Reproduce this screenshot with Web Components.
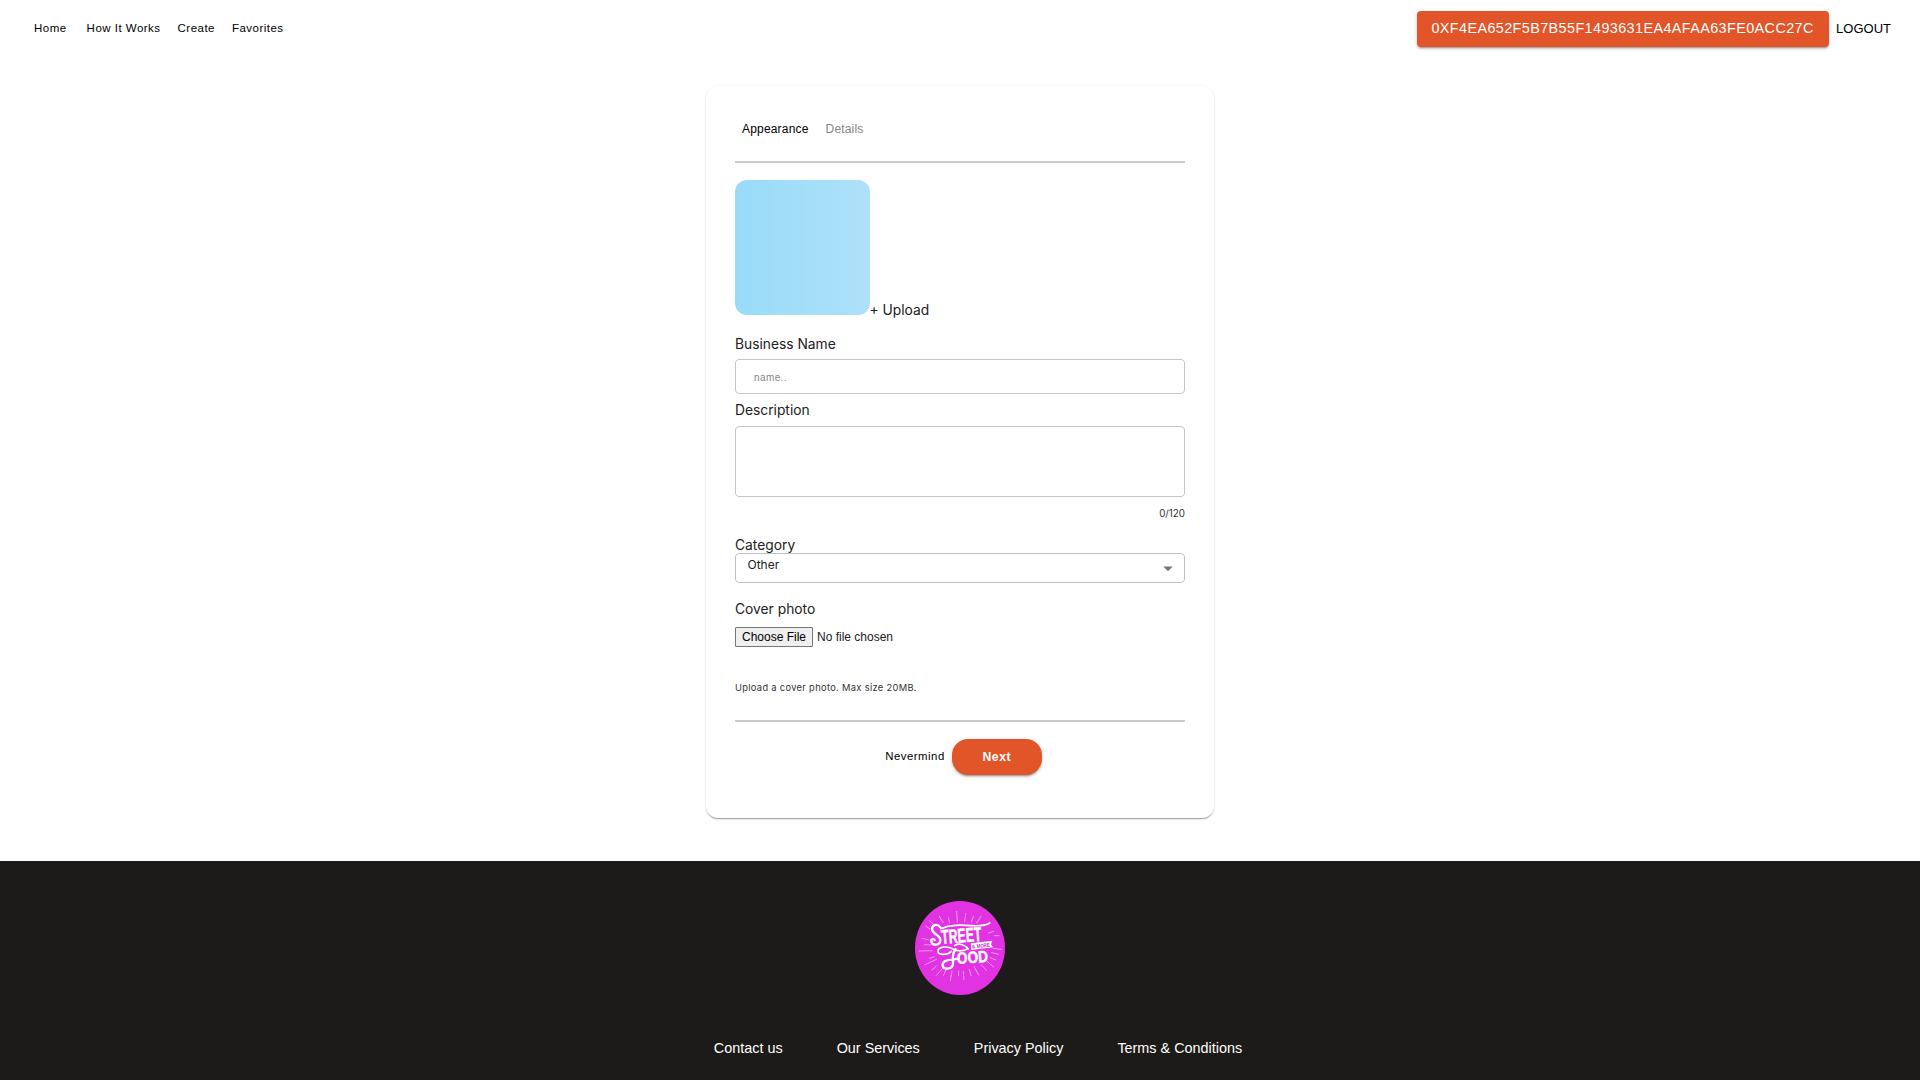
<!DOCTYPE html>
<html lang="en">
<head>
<meta charset="utf-8">
<title>Create a business</title>
<style>
body{margin:0;background:#fff;font-family:"Liberation Sans",Arial,sans-serif;color:#000;overflow:hidden}
</style>
</head>
<body>
<create-page></create-page>
<script>
const define = (name, html) => {
  const tpl = document.createElement('template');
  tpl.innerHTML = html;
  customElements.define(name, class extends HTMLElement {
    constructor() {
      super();
      this.attachShadow({ mode: 'open' }).appendChild(tpl.content.cloneNode(true));
    }
  });
};

define('nav-link', `<style>
:host{display:block;font-size:11.5px;line-height:16px;letter-spacing:.48px;white-space:nowrap}
</style><slot></slot>`);

define('wallet-button', `<style>
:host{display:flex;align-items:center;justify-content:center;box-sizing:border-box;width:412px;height:36px;padding:0 1px 2px 0;border-radius:4px;background:#e15529;color:#fff;font-size:14.4px;letter-spacing:.4px;white-space:nowrap;box-shadow:0 3px 1px -2px rgba(0,0,0,.2),0 2px 2px 0 rgba(0,0,0,.14),0 1px 5px 0 rgba(0,0,0,.12)}
</style><slot></slot>`);

define('site-header', `<style>
:host{display:flex;justify-content:space-between;align-items:flex-start;box-sizing:border-box;height:86px;padding:11px 29px 0 34px}
nav{display:flex;gap:17px;padding-top:9px}
nav-link:first-child{margin-right:3px}
.account{display:flex;gap:7px;align-items:center}
.logout{font-size:13px;line-height:20px;letter-spacing:0}
</style>
<nav><nav-link>Home</nav-link><nav-link>How It Works</nav-link><nav-link>Create</nav-link><nav-link>Favorites</nav-link></nav>
<div class="account"><wallet-button>0XF4EA652F5B7B55F1493631EA4AFAA63FE0ACC27C</wallet-button><span class="logout">LOGOUT</span></div>`);

define('form-tabs', `<style>
:host{display:flex;gap:17px;box-sizing:border-box;height:46px;padding:4px 7px 0;border-bottom:2px solid #cacaca;font-size:12px;line-height:16px;letter-spacing:.18px}
.off{color:#858585}
</style><span>Appearance</span><span class="off">Details</span>`);

define('photo-upload', `<style>
:host{display:flex;align-items:flex-end;margin-top:17px;font:13.8px/20px Inter,sans-serif;color:#212121}
i{width:135px;height:135px;border-radius:12px;background:linear-gradient(90deg,#98dbf8,#aee1f9)}
span{margin:0 0 -5px -.5px}
</style><i></i><span><slot></slot></span>`);

define('field-label', `<style>
:host{display:block;font:13.8px/20px Inter,sans-serif;color:#212121}
</style><slot></slot>`);

define('text-field', `<style>
:host{display:flex;align-items:center;box-sizing:border-box;border:1px solid #c6c6c6;border-radius:4px;height:var(--h,35px);padding:2px 18px 0;font-size:10px;letter-spacing:.4px;color:#858585}
</style><slot></slot>`);

define('select-field', `<style>
:host{display:flex;justify-content:space-between;box-sizing:border-box;border:1px solid #bfbfbf;border-radius:4px;height:30px;padding:3px 11px 0 11.5px;font:12px/16px Inter,sans-serif;color:#212121}
svg{margin-top:9px;width:10px;height:6px}
</style><slot></slot><svg viewBox="0 0 10 6"><path d="M.3.5h9.4L5 5.3z" fill="#757575"/></svg>`);

define('file-field', `<style>
:host{display:flex;align-items:center;gap:4px;font-size:12px;line-height:16px;color:#212121}
button{box-sizing:border-box;width:78px;height:20px;padding:0;margin:0;border:1px solid #767676;background:#efefef;color:#000;font:inherit;border-radius:1px}
</style><button>Choose File</button><span>No file chosen</span>`);

define('form-actions', `<style>
:host{display:flex;align-items:center;justify-content:center;gap:7px;box-sizing:border-box;margin-top:17px;padding-left:7px;font-size:11.4px;letter-spacing:.5px}
span{padding-bottom:2px}
b{display:flex;align-items:center;justify-content:center;width:90px;height:36px;border-radius:16px;background:#e15529;color:#fff;font-size:12.2px;letter-spacing:.5px;box-shadow:0 3px 1px -2px rgba(0,0,0,.2),0 2px 2px 0 rgba(0,0,0,.14),0 1px 5px 0 rgba(0,0,0,.12)}
</style><span>Nevermind</span><b>Next</b>`);

define('form-card', `<style>
:host{display:block;box-sizing:border-box;width:508px;height:732px;margin:0 auto;padding:31px 29px 0;border-radius:12px;background:#fff;box-shadow:0 2px 1px -1px rgba(0,0,0,.2),0 1px 1px 0 rgba(0,0,0,.14),0 1px 3px 0 rgba(0,0,0,.12)}
.name{margin:19px 0 5px}.desc{margin:6px 0 6px}
.count{font:9.8px/14px Inter,sans-serif;color:#333;text-align:right;margin:10px 0 14px}
.cat{margin:0 0 -2px}.cover{margin:16px 0 8px}
.hint{font:9.3px/14px Inter,sans-serif;letter-spacing:.33px;color:#333;margin-top:34px}
.rule{height:2px;background:#cacaca;margin-top:25px}
text-field.area{--h:71px}
</style>
<form-tabs></form-tabs>
<photo-upload>+ Upload</photo-upload>
<field-label class="name">Business Name</field-label>
<text-field>name..</text-field>
<field-label class="desc">Description</field-label>
<text-field class="area"></text-field>
<div class="count">0/120</div>
<field-label class="cat">Category</field-label>
<select-field>Other</select-field>
<field-label class="cover">Cover photo</field-label>
<file-field></file-field>
<div class="hint">Upload a cover photo. Max size 20MB.</div>
<div class="rule"></div>
<form-actions></form-actions>`);

define('brand-logo', `<style>:host{display:block;width:90px;height:94px}svg{display:block;width:100%;height:100%}</style>
<svg viewBox="45 33 270 282" preserveAspectRatio="none">
<ellipse cx="180" cy="174" rx="135" ry="141" fill="#e233e2"/>
<g stroke="#fff" stroke-width="2.2" stroke-linecap="round" opacity=".7">
<path d="M170 64l2 33M118 79l11 19M145 84l4 14M197 70l-3 26M220 80l-6 16M243 79l-13 20M89 92l14 13M78 109l12 8M281 124l-16 5M283 137h14M66 145l20 5M73 164l18 1M58 183l38-1M279 175l25 3M275 188l20 5M88 205l15-5M75 224l35-16M271 203l16 7M109 228l-13 12M127 236l-18 20M262 215l19 16M244 224l15 17M138 239l-8 18M156 243l-5 29M176 243v14M190 245l2 24M208 238l5 19M223 231l13 24"/>
</g>
<g fill="none" stroke="#fff" stroke-linecap="round" stroke-linejoin="round">
<path stroke-width="7" d="M121 112c-8-12-25-8-25 5 0 17 26 16 25 34-1 16-24 17-27 4-2-8 7-11 10-5"/>
<path stroke-width="5" d="M122 116c30-13 61-11 93-9 24 1 41 1 54-8"/>
<path stroke-width="5" d="M154 184c-12 12-39 12-40 0-1-14 27-17 45-7 16 9 32 6 45-1M205 177c-11-15-32-18-41-10"/>
<path stroke-width="7" d="M167 178c-13 14-7 28-8 43-1 18-28 19-31 6-2-13 14-18 29-18 10 0 12-3 20-5"/>
</g>
<g fill="#fff" stroke="#fff" stroke-width="1.4" font-family="Liberation Sans" font-weight="700">
<text transform="translate(125 162) rotate(-4.500)" font-size="60" textLength="121" lengthAdjust="spacingAndGlyphs">TREET</text>
<text transform="translate(172 222) rotate(-4)" font-size="49" textLength="93" lengthAdjust="spacingAndGlyphs">OOD</text>
</g>
<path d="M212 160l65-8-4 11 6 9-65 8z" fill="#fff"/>
<text transform="translate(217 175.500) rotate(-6)" font-family="Liberation Sans" font-weight="700" font-size="16" textLength="53" lengthAdjust="spacingAndGlyphs" fill="#c42bc4">&amp; MORE</text>
</svg>`);

define('site-footer', `<style>
:host{display:flex;flex-direction:column;align-items:center;box-sizing:border-box;margin-top:43px;height:219px;padding-top:40px;background:#1c1b19;color:#fff}
nav{display:flex;gap:54px;margin:43px 0 0 36px;font-size:14.4px;line-height:20px;white-space:nowrap}
</style><brand-logo></brand-logo>
<nav><span>Contact us</span><span>Our Services</span><span>Privacy Policy</span><span>Terms &amp; Conditions</span></nav>`);

define('create-page', `<style>:host{display:block;height:1080px;overflow:hidden}</style>
<site-header></site-header><form-card></form-card><site-footer></site-footer>`);
</script>
</body>
</html>
